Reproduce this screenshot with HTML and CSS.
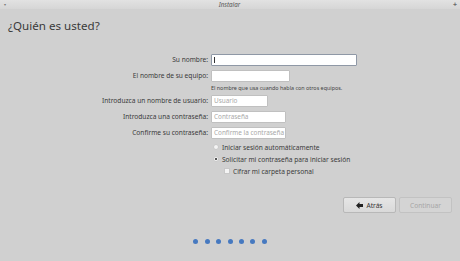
FILE: index.html
```html
<!DOCTYPE html>
<html lang="es">
<head>
<meta charset="utf-8">
<title>Instalar</title>
<link rel="stylesheet" href="styles.css">
</head>
<body>
<div class="window">
  <div class="titlebar">
    <span class="tb-menu">&#9662;</span>
    <span class="tb-title">Instalar</span>
    <span class="tb-close">+</span>
  </div>
  <h1 class="heading">¿Quién es usted?</h1>
  <div class="form">
    <label class="label">Su nombre:</label>
    <div class="field"><div class="input input-focus w-name"><span class="caret"></span></div></div>

    <label class="label">El nombre de su equipo:</label>
    <div class="field"><div class="input w-host"></div></div>

    <div class="help">El nombre que usa cuando habla con otros equipos.</div>

    <label class="label">Introduzca un nombre de usuario:</label>
    <div class="field"><div class="input w-user"><span class="ph">Usuario</span></div></div>

    <label class="label">Introduzca una contraseña:</label>
    <div class="field"><div class="input w-pass"><span class="ph">Contraseña</span></div></div>

    <label class="label">Confirme su contraseña:</label>
    <div class="field"><div class="input w-pass"><span class="ph">Confirme la contraseña</span></div></div>

    <div class="options">
      <div class="opt"><span class="radio"></span><span>Iniciar sesión automáticamente</span></div>
      <div class="opt"><span class="radio checked"></span><span>Solicitar mi contraseña para iniciar sesión</span></div>
      <div class="opt sub"><span class="check"></span><span>Cifrar mi carpeta personal</span></div>
    </div>
  </div>
  <div class="buttons">
    <div class="btn">
      <svg class="arrow" width="7" height="7" viewBox="0 0 8 8"><path d="M0 4 L4 0 L4 2.3 L8 2.3 L8 5.7 L4 5.7 L4 8 Z" fill="#222"/></svg>
      <span>Atrás</span>
    </div>
    <div class="btn disabled"><span>Continuar</span></div>
  </div>
  <div class="dots">
    <span class="dot"></span><span class="dot"></span><span class="dot"></span><span class="dot"></span><span class="dot"></span><span class="dot"></span><span class="dot"></span>
  </div>
</div>
</body>
</html>
```
FILE: styles.css
```css
html, body {
  margin: 0;
  padding: 0;
  background: #d0d0d0;
}
.window {
  width: 460px;
  height: 261px;
  font-family: "Noto Sans", "Open Sans", sans-serif;
  color: #3a3a3a;
  overflow: hidden;
}
.titlebar {
  height: 9px;
  background: linear-gradient(#e2e2e2, #d6d6d6);
  display: flex;
  justify-content: space-between;
  align-items: center;
  padding: 0 3px 0 4px;
  font-size: 6.2px;
  line-height: 9px;
  color: #555;
}
.tb-menu { font-size: 4px; color: #777; }
.tb-title { font-style: italic; color: #555; }
.tb-close { font-size: 7px; font-weight: bold; color: #666; }
.heading {
  margin: 9px 0 0 8px;
  font-size: 11.6px;
  line-height: 15px;
  font-weight: normal;
  color: #3a3a3a;
}
.form {
  margin-top: 21px;
  display: grid;
  grid-template-columns: 208px 1fr;
  column-gap: 3px;
  row-gap: 4px;
}
.label {
  text-align: right;
  font-size: 6.6px;
  line-height: 12px;
  color: #3a3a3a;
  white-space: nowrap;
}
.field { height: 12px; }
.input {
  box-sizing: border-box;
  height: 12px;
  background: #fff;
  border: 1px solid #c0c0c0;
  border-radius: 1px;
  font-size: 6.4px;
  line-height: 10px;
  padding-left: 2px;
  position: relative;
}
.input-focus { border-color: #8f98a6; }
.caret {
  position: absolute;
  left: 2px;
  top: 2px;
  width: 1px;
  height: 6px;
  background: #333;
}
.ph { color: #a8a8a8; }
.w-name { width: 146px; }
.w-host { width: 79px; }
.w-user { width: 57px; }
.w-pass { width: 75px; }
.help {
  grid-column: 2;
  font-size: 5.4px;
  line-height: 6px;
  color: #444;
  margin-top: -1px;
}
.options {
  grid-column: 2;
  margin-top: -2px;
  padding-left: 2px;
}
.opt {
  display: flex;
  align-items: center;
  height: 12px;
  font-size: 6.6px;
  color: #3a3a3a;
  white-space: nowrap;
}
.opt.sub { padding-left: 11px; }
.radio {
  box-sizing: border-box;
  width: 6px;
  height: 6px;
  border-radius: 50%;
  background: #f4f4f4;
  border: 1px solid #c8c8c8;
  margin-right: 3px;
  position: relative;
}
.radio.checked::after {
  content: "";
  position: absolute;
  left: 1px;
  top: 1px;
  width: 2px;
  height: 2px;
  border-radius: 50%;
  background: #222;
}
.check {
  box-sizing: border-box;
  width: 6px;
  height: 6px;
  background: #f4f4f4;
  border: 1px solid #c8c8c8;
  margin-right: 3px;
}
.buttons {
  display: flex;
  justify-content: flex-end;
  gap: 3px;
  margin-top: 20px;
  padding-right: 8px;
}
.btn {
  box-sizing: border-box;
  width: 53px;
  height: 16px;
  display: flex;
  align-items: center;
  justify-content: center;
  gap: 3px;
  background: linear-gradient(#e6e6e6, #d9d9d9);
  border: 1px solid #b8b8b8;
  border-radius: 2px;
  font-size: 6.6px;
  color: #333;
}
.btn.disabled {
  color: #a6a6a6;
  background: #d4d4d4;
  border-color: #c2c2c2;
}
.dots {
  display: flex;
  justify-content: center;
  gap: 6.4px;
  margin-top: 26px;
}
.dot {
  width: 5px;
  height: 5px;
  border-radius: 50%;
  background: #4679c0;
}
```
